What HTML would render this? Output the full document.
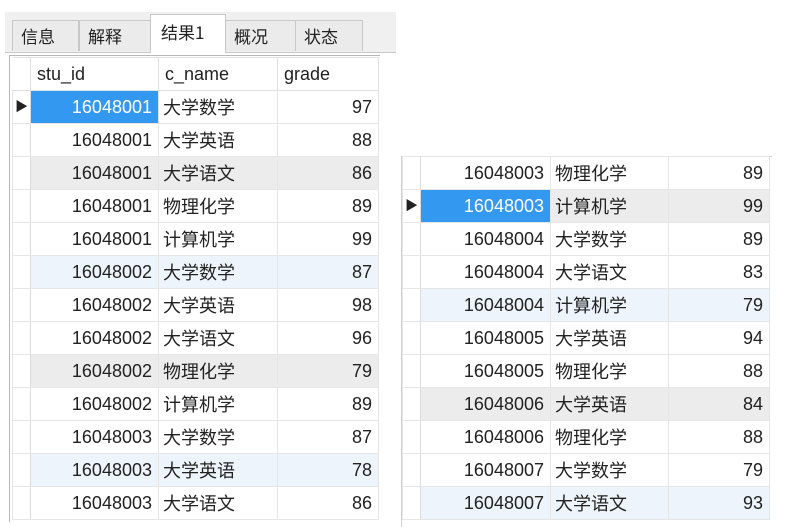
<!DOCTYPE html>
<html><head><meta charset="utf-8"><style>
body{margin:0;width:791px;height:526px;background:#fff;position:relative;overflow:hidden;font-family:"Liberation Sans","Noto Sans CJK SC",sans-serif;font-size:18px;color:#222}
.strip{position:absolute;left:5px;top:12px;width:391px;height:40px;background:#f0f0f0;border-bottom:1px solid #c8c8c8}
.tab{position:absolute;top:20px;height:31px;border:1px solid #c8c8c8;border-bottom:none;background:#ebebeb;line-height:30px;padding-left:8px;box-sizing:border-box;font-family:"Noto Sans CJK SC",sans-serif;font-size:17px}
.tab.act{top:14px;height:39px;background:#fff;line-height:34px;padding-left:10px}
table{position:absolute;border-collapse:collapse;table-layout:fixed}
td{height:32px;line-height:32px;border:1px solid #e6e6e6;padding:0 6px;white-space:nowrap;overflow:hidden}
td.n{text-align:right}
tr td:nth-child(3){font-family:"Noto Sans CJK SC",sans-serif;padding-left:4px}
td.i{padding:0;border-right:1px solid #dcdcdc;background:#fff;font-size:13px;text-align:center}
tr.g td{background:#ececec}
tr.b td{background:#eef4fb}
tr.g td.i,tr.b td.i{background:#fff}
td.sel{background:#3399f0!important;color:#fff}
th{height:32px;font-weight:normal;text-align:left;padding:0 6px;border:1px solid #e0e0e0;background:#fff}
.box{position:absolute;border:1px solid #b8b8b8}
</style></head><body>
<div class="strip"></div>
<div class="tab" style="left:12px;width:67px">信息</div>
<div class="tab" style="left:79px;width:72px">解释</div>
<div class="tab act" style="left:150px;width:76px">结果1</div>
<div class="tab" style="left:225px;width:71px">概况</div>
<div class="tab" style="left:295px;width:68px">状态</div>
<div class="box" style="left:9px;top:55px;width:370px;height:466px;border-right:none;border-bottom:none"></div>
<table style="left:12px;top:57px;width:366px">
<colgroup><col style="width:18px"><col style="width:128px"><col style="width:119px"><col style="width:101px"></colgroup>
<tr><th style="border-left:none"></th><th>stu_id</th><th>c_name</th><th>grade</th></tr>
<tr><td class="i">▶</td><td class="n sel">16048001</td><td>大学数学</td><td class="n">97</td></tr>
<tr><td class="i"></td><td class="n">16048001</td><td>大学英语</td><td class="n">88</td></tr>
<tr class="g"><td class="i"></td><td class="n">16048001</td><td>大学语文</td><td class="n">86</td></tr>
<tr><td class="i"></td><td class="n">16048001</td><td>物理化学</td><td class="n">89</td></tr>
<tr><td class="i"></td><td class="n">16048001</td><td>计算机学</td><td class="n">99</td></tr>
<tr class="b"><td class="i"></td><td class="n">16048002</td><td>大学数学</td><td class="n">87</td></tr>
<tr><td class="i"></td><td class="n">16048002</td><td>大学英语</td><td class="n">98</td></tr>
<tr><td class="i"></td><td class="n">16048002</td><td>大学语文</td><td class="n">96</td></tr>
<tr class="g"><td class="i"></td><td class="n">16048002</td><td>物理化学</td><td class="n">79</td></tr>
<tr><td class="i"></td><td class="n">16048002</td><td>计算机学</td><td class="n">89</td></tr>
<tr><td class="i"></td><td class="n">16048003</td><td>大学数学</td><td class="n">87</td></tr>
<tr class="b"><td class="i"></td><td class="n">16048003</td><td>大学英语</td><td class="n">78</td></tr>
<tr><td class="i"></td><td class="n">16048003</td><td>大学语文</td><td class="n">86</td></tr>
</table>
<div class="box" style="left:401px;top:156px;width:370px;height:370px;border-right:none;border-bottom:none;border-color:#d0d0d0"></div>
<table style="left:402px;top:156px;width:367px">
<colgroup><col style="width:18px"><col style="width:130px"><col style="width:118px"><col style="width:101px"></colgroup>
<tr><td class="i"></td><td class="n">16048003</td><td>物理化学</td><td class="n">89</td></tr>
<tr class="g"><td class="i">▶</td><td class="n sel">16048003</td><td>计算机学</td><td class="n">99</td></tr>
<tr><td class="i"></td><td class="n">16048004</td><td>大学数学</td><td class="n">89</td></tr>
<tr><td class="i"></td><td class="n">16048004</td><td>大学语文</td><td class="n">83</td></tr>
<tr class="b"><td class="i"></td><td class="n">16048004</td><td>计算机学</td><td class="n">79</td></tr>
<tr><td class="i"></td><td class="n">16048005</td><td>大学英语</td><td class="n">94</td></tr>
<tr><td class="i"></td><td class="n">16048005</td><td>物理化学</td><td class="n">88</td></tr>
<tr class="g"><td class="i"></td><td class="n">16048006</td><td>大学英语</td><td class="n">84</td></tr>
<tr><td class="i"></td><td class="n">16048006</td><td>物理化学</td><td class="n">88</td></tr>
<tr><td class="i"></td><td class="n">16048007</td><td>大学数学</td><td class="n">79</td></tr>
<tr class="b"><td class="i"></td><td class="n">16048007</td><td>大学语文</td><td class="n">93</td></tr>
</table>
</body></html>
